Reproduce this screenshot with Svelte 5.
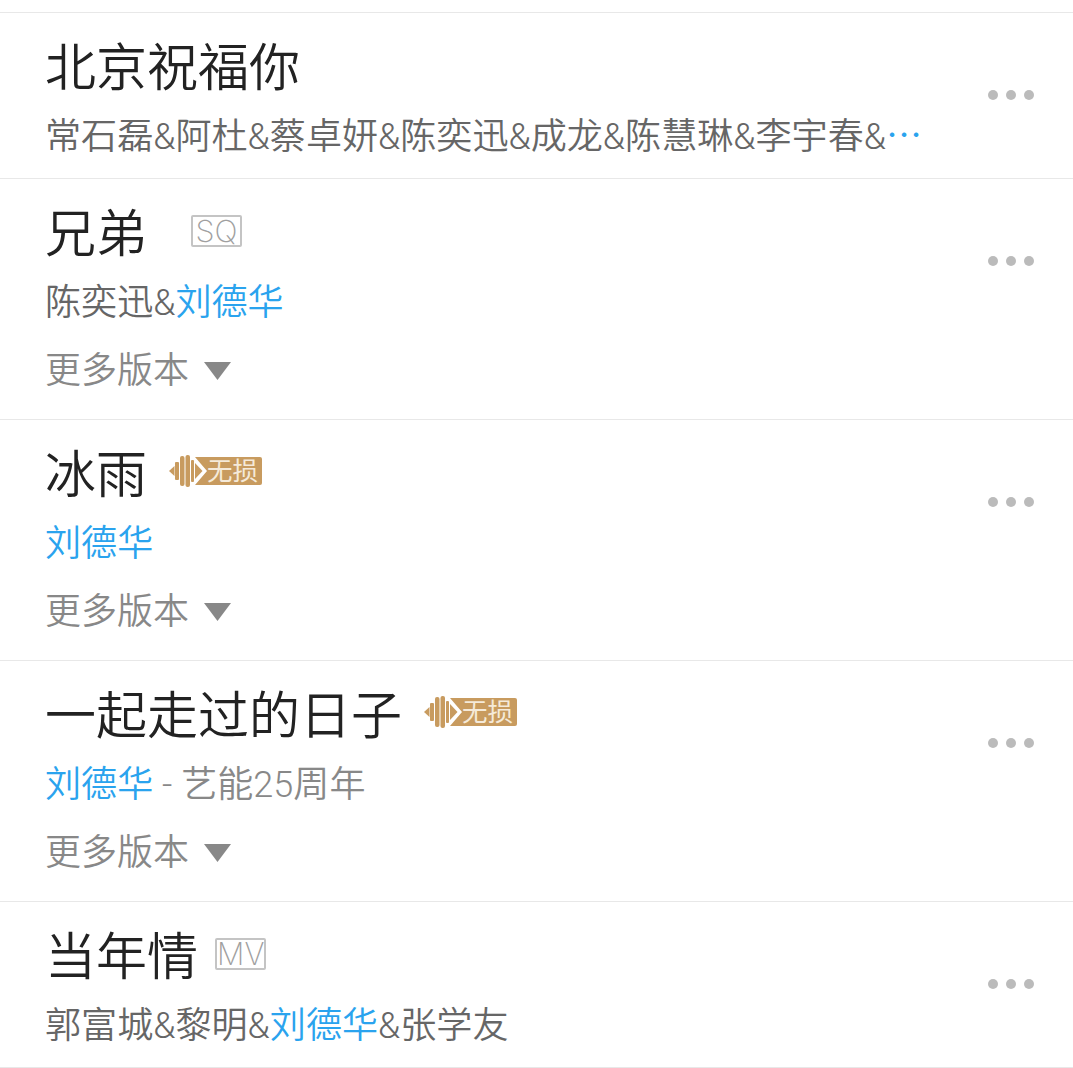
<script>
    const songs = [
        {
            title: "北京祝福你",
            artists: [{ t: "常石磊&阿杜&蔡卓妍&陈奕迅&成龙&陈慧琳&李宇春&" }, { t: "⋯", hot: true }],
        },
        {
            title: "兄弟",
            tag: "SQ",
            artists: [{ t: "陈奕迅&" }, { t: "刘德华", hot: true }],
            more: true,
        },
        {
            title: "冰雨",
            lossless: true,
            artists: [{ t: "刘德华", hot: true }],
            more: true,
        },
        {
            title: "一起走过的日子",
            lossless: true,
            artists: [{ t: "刘德华", hot: true }],
            album: " - 艺能25周年",
            more: true,
        },
        {
            title: "当年情",
            tag: "MV",
            artists: [{ t: "郭富城&黎明&" }, { t: "刘德华", hot: true }, { t: "&张学友" }],
        },
    ];
</script>

<div class="list">
    {#each songs as song}
        <div class="row">
            <div class="info">
                <div class="title">
                    <span>{song.title}</span>
                    {#if song.tag}
                        <span class="tag" class:sq={song.tag === "SQ"}>{song.tag}</span>
                    {/if}
                    {#if song.lossless}
                        <span class="lossless">
                            <svg width="38" height="32" viewBox="0 0 38 32">
                                <path d="M0 16 L5.5 11 V21 Z" fill="#c89b5f" />
                                <rect x="6" y="7" width="4" height="18" rx="1" fill="#c89b5f" />
                                <rect x="11" y="1" width="4.5" height="30" rx="2" fill="#c89b5f" />
                                <rect x="16.5" y="0" width="4.5" height="32" rx="2" fill="#c89b5f" />
                                <rect x="22" y="5" width="3" height="22" rx="1" fill="#c89b5f" />
                                <path d="M26 2 H38 V30 H26 L38 16 Z" fill="#c89b5f" />
                                <path d="M26 8 L33.5 16 L26 24 Z" fill="#c89b5f" />
                            </svg>
                            <span class="lossless-text">无损</span>
                        </span>
                    {/if}
                </div>
                <div class="artists">
                    {#each song.artists as a}<span class:hot={a.hot}>{a.t}</span>{/each}{#if song.album}<span class="album">{song.album}</span>{/if}
                </div>
                {#if song.more}
                    <div class="more">
                        <span>更多版本</span>
                        <svg width="27" height="18" viewBox="0 0 27 18">
                            <path d="M0 0 H27 L13.5 18 Z" fill="#888" />
                        </svg>
                    </div>
                {/if}
            </div>
            <div class="dots">
                <i></i><i></i><i></i>
            </div>
        </div>
    {/each}
</div>

<style>
    :global(body) {
        background: #fff;
    }

    .list {
        margin-top: 12px;
        border-top: 1px solid #e8e8e8;
        font-family: Roboto, "Noto Sans CJK SC", sans-serif;
        font-weight: 350;
    }

    .row {
        display: flex;
        justify-content: space-between;
        padding: 0 39px 0 45px;
        border-bottom: 1px solid #e8e8e8;
    }

    .info {
        padding-top: 20px;
    }

    .title {
        display: flex;
        align-items: center;
        height: 62px;
        font-size: 51px;
        color: #222;
        white-space: nowrap;
    }

    .tag {
        display: block;
        box-sizing: border-box;
        width: 51px;
        height: 32px;
        margin: 2px 0 0 17px;
        border: 2px solid #c4c4c4;
        border-radius: 2px;
        font-family: Inter, sans-serif;
        font-size: 30.5px;
        font-weight: 200;
        line-height: 28px;
        text-align: center;
        color: #a0a0a0;
    }

    .tag.sq {
        margin-left: 44px;
    }

    .lossless {
        display: flex;
        align-items: center;
        margin: 0 0 0 22px;
    }

    .lossless-text {
        display: block;
        width: 55px;
        height: 28px;
        background: #c89b5f;
        border-radius: 0 2px 2px 0;
        font-size: 25.5px;
        font-weight: 400;
        line-height: 28px;
        color: #f5ead9;
    }

    .artists {
        height: 44px;
        margin-top: 20px;
        font-size: 36.1px;
        line-height: 44px;
        color: #666;
        white-space: nowrap;
    }

    .hot {
        color: #2aa3ee;
    }

    .album {
        color: #888;
    }

    .more {
        display: flex;
        align-items: center;
        gap: 15px;
        height: 44px;
        margin-top: 20px;
        font-size: 36px;
        color: #888;
    }

    .more svg {
        margin-top: 8px;
    }

    .artists:last-child {
        margin-bottom: 19px;
    }

    .more:last-child {
        margin-bottom: 30px;
    }

    .dots {
        display: flex;
        gap: 8px;
        margin-top: 77px;
    }

    .dots i {
        display: block;
        width: 10px;
        height: 10px;
        border-radius: 50%;
        background: #bbb;
    }
</style>
